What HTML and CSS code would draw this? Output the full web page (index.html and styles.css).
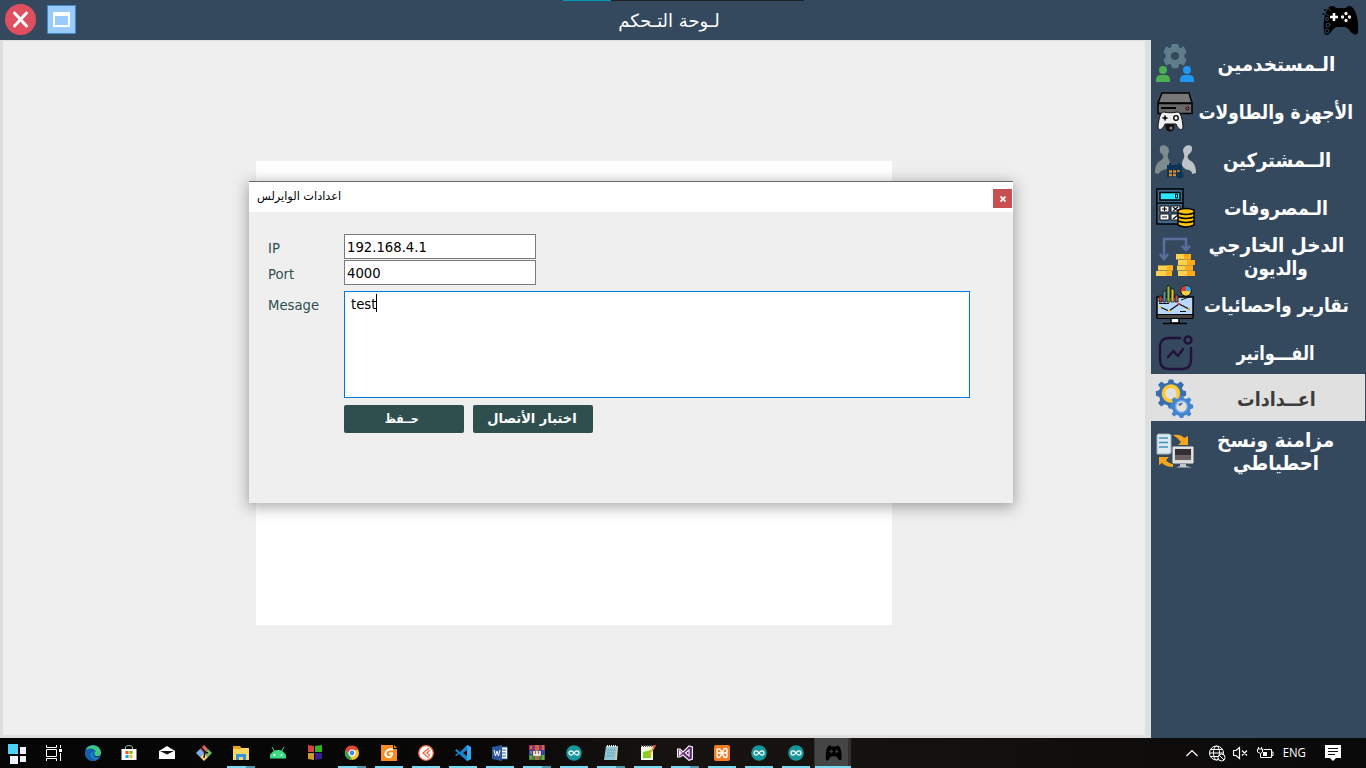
FILE: index.html
```html
<!DOCTYPE html>
<html lang="ar">
<head>
<meta charset="utf-8">
<title>لوحة التحكم</title>
<link rel="stylesheet" href="styles.css">
</head>
<body>
<svg class="defs" width="0" height="0" aria-hidden="true">
  <defs>
    <g id="pad">
      <path d="M7 2C10 0 13 1 14 3H24C26 0 29 1 31 3C35 8 37 18 36 27C35 31 31 30 28 26C26 23 24 22 22 22H16C13 22 11 24 9 27C6 31 3 31 2 27C1 18 2 8 7 2Z"/>
    </g>
    <g id="arduino">
      <circle cx="8" cy="8" r="7.800" fill="#16979c"/>
      <path d="M8 8C6 5 3 5.500 3 8S6 11 8 8S13 5.500 13 8S10 11 8 8Z" fill="none" stroke="#fff" stroke-width="1.300"/>
    </g>
    <path id="gear" d="M-3-12H3L4-8.500L7-7L10.500-9L13-4L10.500-2V2L13 4L10.500 9L7 7L4 8.500L3 12H-3L-4 8.500L-7 7L-10.500 9L-13 4L-10.500 2V-2L-13-4L-10.500-9L-7-7L-4-8.500Z"/>
    <path id="gear8" d="M-2-13H2L3-10L6-9L9-11L12-8L10-5L11-3L14-2V2L11 3L10 6L12 9L9 12L6 10L3 11L2 14H-2L-3 11L-6 10L-9 12L-12 9L-10 6L-11 3L-14 2V-2L-11-3L-10-5L-12-8L-9-11L-6-9L-3-10Z"/>
  </defs>
</svg>
<div class="app">
  <header class="topbar">
    <svg class="close" width="31" height="31" viewBox="0 0 31 31"><circle cx="15.500" cy="15.500" r="15.500" fill="#e04f5f"/><path d="M9.500 9L21.500 22M21.500 9L9.500 22" stroke="#fff" stroke-width="3" stroke-linecap="round"/></svg>
    <svg class="restore" width="29" height="29" viewBox="0 0 29 29"><path d="M.5.5H28.500V28.500H.5Z" fill="#98ccfd" stroke="#4788c7"/><path d="M7 9H22V21H7Z" fill="#98ccfd" stroke="#fff" stroke-width="2"/><path d="M6 7H23V11H6Z" fill="#fff"/></svg>
    <h1 class="title" dir="rtl">لـوحة التـحكم</h1>
    <svg class="brand" width="37" height="31" viewBox="0 0 37 31"><use href="#pad"/><path d="M8 12H16M12 8V16" stroke="#fff" stroke-width="2.500"/><g fill="none" stroke="#fff" stroke-width="1.300"><circle cx="24" cy="8.500" r="1"/><circle cx="24" cy="15.500" r="1"/><circle cx="20.500" cy="12" r="1"/><circle cx="27.500" cy="12" r="1"/></g><g fill="none" stroke="#34495e"><circle cx="5" cy="14" r="1.500"/><circle cx="6" cy="20" r="2"/><circle cx="5" cy="26" r="2"/><path d="M2 8L7 11M6 3L9 6"/></g><g fill="#000"><circle cx="3" cy="5" r="1"/><circle cx="1.500" cy="9" r="1"/><circle cx="5" cy="8" r="1"/></g></svg>
    <i class="strip"></i>
  </header>
  <div class="body">
    <main class="stage"><div class="panel"></div></main>
    <nav class="side">
      <a class="item"><svg width="40" height="40" viewBox="0 0 40 40"><use href="#gear" transform="translate(20 12) scale(.8 .92)" fill="#607d8b" stroke="#607d8b" stroke-width="2.500" stroke-linejoin="round"/><circle cx="20" cy="12" r="4" fill="#34495e"/><circle cx="8" cy="26" r="4" fill="#4caf50"/><path d="M1 38V36Q1 31 6 31H10Q15 31 15 36V38Z" fill="#4caf50"/><circle cx="32" cy="26" r="4" fill="#2196f3"/><path d="M25 38V36Q25 31 30 31H34Q39 31 39 36V38Z" fill="#2196f3"/></svg><span class="label" dir="rtl"><b class="t1">الـمستخدمين</b></span></a>
      <a class="item"><svg width="40" height="40" viewBox="0 0 40 40"><path d="M7 1H34L37 11H3Z" fill="#777" stroke="#000" stroke-width="1.500"/><path d="M3 11.500H37V21.500H3Z" fill="#686868" stroke="#000" stroke-width="1.500"/><path d="M6 16H21" stroke="#000" stroke-width="2"/><circle cx="32.500" cy="16.500" r="1.500" fill="#ff4081" stroke="#000"/><circle cx="15" cy="35" r="4.500" fill="#111"/><path d="M9 20C13 21 18 21 22 20C26 20 27 26 28 34C28 39 24 39 21 32H10C7 39 3 39 3 34C4 27 5 20 9 20Z" fill="#eee" stroke="#111"/><path d="M7.500 26H12.500M10 23.500V28.500" stroke="#000" stroke-width="1.500"/><circle cx="21" cy="26" r="2.300" fill="none" stroke="#000" stroke-width="1.300"/><circle cx="16" cy="36" r="1.500" fill="#888"/></svg><span class="label" dir="rtl"><b class="t2">الأجهزة والطاولات</b></span></a>
      <a class="item"><svg width="42" height="40" viewBox="0 0 42 40"><path d="M5 7C7 4 13 5 14 10C14 13 12 15 13 18C17 24 15 29 8 30C5 31 4 33 4 34L0 33C0 26 2 23 5 21C9 19 9 16 7 14C4 12 5 10 5 7Z" fill="#7f8c8d"/><path d="M37 7C35 4 29 5 28 10C28 13 30 15 29 18C25 24 27 29 34 30C37 31 37 33 37 34L41 33C41 26 39 23 36 21C32 19 32 16 34 14C37 12 37 10 37 7Z" fill="#bdc3c7"/><path d="M12 25H27V37H12Z" fill="#0b3556"/><path d="M15 23V27M24 23V27" stroke="#0b3556" stroke-width="2"/><path d="M14 31.500H25M14 35H21" stroke="#d98a2a" stroke-width="2.500" stroke-dasharray="3 1"/><circle cx="25" cy="35" r="3.500" fill="#0b3556"/></svg><span class="label" dir="rtl"><b class="t3">الــمشتركين</b></span></a>
      <a class="item"><svg width="40" height="40" viewBox="0 0 40 40"><path d="M1.800 1H28V36H1.800Z" fill="#3f6587" stroke="#000" stroke-width="1.500"/><path d="M5 4.500H25V12H5Z" fill="#2be4ff" stroke="#000" stroke-width="1.500"/><path d="M20.500 6H22.500V10H20.500Z" fill="none" stroke="#000"/><path d="M2 15H28" stroke="#000" stroke-width="1.500"/><path d="M5 18H14V24H5ZM16 18H25V24H16ZM5 26H14V32H5ZM16 26H25V32H16Z" fill="#fff" stroke="#111"/><path d="M7 21H12M9.500 19V23M18 19L23 23M23 19L18 23M7 29H12M18 31L23 27" stroke="#000" stroke-width="1.200"/><path d="M23 22Q31 19 39 22V37Q31 41 23 37Z" fill="#ffc50e" stroke="#000" stroke-width="1.500"/><path d="M23 25Q31 28 39 25M23 29Q31 32 39 29M23 33Q31 36 39 33" fill="none" stroke="#000" stroke-width="1.500"/></svg><span class="label" dir="rtl"><b class="t4">الـمصروفات</b></span></a>
      <a class="item two"><svg width="40" height="40" viewBox="0 0 40 40"><path d="M9 20V2H31V12M5 17L9 22L13 17M27 9L31 13L35 9" fill="none" stroke="#5a6f9e" stroke-width="2.500"/><path d="M3 28.500H18V33.500H3ZM1 34H17V39H1Z" fill="#ffd04c"/><path d="M12 28.500H18V33.500H12ZM11 34H17V39H11Z" fill="#ffb21d"/><path d="M21 17H35V22.500H21ZM23 23H39V28H23ZM22 28.500H38V33.500H22ZM23 34H39V39H23Z" fill="#ffd04c"/><path d="M29 17H36V22.500H29ZM32 23H40V28H32ZM30 28.500H38V33.500H30ZM32 34H40V39H32Z" fill="#ffaa16"/></svg><span class="label" dir="rtl"><b class="t5">الدخل الخارجي</b><b class="t6">والديون</b></span></a>
      <a class="item"><svg width="40" height="40" viewBox="0 0 40 40"><path d="M2 12H38V32H2Z" fill="#b9d8ff" stroke="#000" stroke-width="1.500"/><path d="M2 29.500H38V33.500H2Z" fill="#454545" stroke="#000"/><path d="M16 34V38H24V34" fill="#fff" stroke="#000" stroke-width="1.500"/><path d="M8 38.500H32" stroke="#000" stroke-width="1.500"/><g stroke="#111" stroke-width=".8"><path d="M4 11H7V17H4Z" fill="#d33"/><path d="M8 6H11V17H8Z" fill="#4d91a4"/><path d="M12 1H15V17H12Z" fill="#91bd2c"/><path d="M16 4H19V17H16Z" fill="#e4b93a"/><path d="M20 10H23V17H20Z" fill="#b55"/></g><path d="M5 22L14 26L24 19L34 24" fill="none" stroke="#111" stroke-width="1.300"/><path d="M4 18.500H14M25 26.500H31M26 15L34 12" stroke="#111"/><circle cx="5" cy="22" r="1.300" fill="#ec3"/><circle cx="14" cy="26" r="1.300" fill="#ec3"/><circle cx="24" cy="19" r="1.300" fill="#d33"/><circle cx="34" cy="24" r="1.300" fill="#e92"/><circle cx="31" cy="6" r="5.200" fill="#ffce3e" stroke="#000"/><path d="M31 6V.8A5.200 5.200 0 0 0 25.800 6Z" fill="#e33c34"/><path d="M31 6V.8A5.200 5.200 0 0 1 36.200 6Z" fill="#39a7df"/></svg><span class="label" dir="rtl"><b class="t7">تقارير واحصائيات</b></span></a>
      <a class="item bill"><svg width="40" height="40" viewBox="0 0 40 40"><g fill="none" stroke="#22113a" stroke-width="2.400" stroke-linecap="round" stroke-linejoin="round"><path d="M25 5H14Q5 5 5 14V27Q5 36 14 36H27Q36 36 36 27V15"/><circle cx="33" cy="7" r="3.500"/><path d="M13 24L18.500 18L23 23L28 16"/></g></svg><span class="label" dir="rtl"><b class="t8">الفـــواتير</b></span></a>
      <a class="item active"><svg width="40" height="40" viewBox="0 0 40 40"><use href="#gear8" transform="translate(16 15.500) scale(1.080)" fill="#3a6dae"/><circle cx="16" cy="15.500" r="7.500" fill="#e0e0e0" stroke="#ffc82e" stroke-width="3.500"/><use href="#gear8" transform="translate(26.500 28.500) scale(.83)" fill="#4384d1"/><circle cx="26.500" cy="28.500" r="6" fill="#e5e1d8" stroke="#62a2e8" stroke-width="1.500"/><path d="M23 27Q25 24 28 25L25 28Z" fill="#3a6dae"/></svg><span class="label" dir="rtl"><b class="t9">اعــدادات</b></span></a>
      <a class="item sync"><svg width="40" height="40" viewBox="0 0 40 40"><path d="M3 2H14L16 3V21L14 22H2V3Z" fill="#dceaf0" stroke="#9aafba"/><path d="M4 6H13M4 10.500H13M4 15H13" stroke="#3b91bd" stroke-width="1.700"/><path d="M18 3Q26 2 29 6L33 4V13H23L26 10Q23 6 18 3Z" fill="#f3a61e"/><path d="M4 33V25H14L11 28Q13 31 18 32L18 35Q11 35 7 31Z" fill="#f3a61e"/><path d="M18 15H38V31H18Z" fill="#d9d9d6" stroke="#eee"/><path d="M20 17H36V28H20Z" fill="#6b5f62"/><path d="M20 17H36V23H20Z" fill="#352e31"/><path d="M25 32H31V34L37 35.500H21L25 34Z" fill="#c4c8c8"/></svg><span class="label" dir="rtl"><b class="t10">مزامنة ونسخ</b><b class="t11">احطياطي</b></span></a>
    </nav>
  </div>
  <footer class="taskbar">
    <div class="start"><svg width="18" height="20" viewBox="0 0 18 20"><path d="M0 0H10V10H0Z" fill="#4cd2f7"/><path d="M12 3H19V10H12ZM2 12H10V20H2ZM12 12H18V18H12Z" fill="#eef4ff"/></svg></div>
    <div class="apps">
      <div class="app-btn"><svg width="16" height="16" viewBox="0 0 16 16"><path d="M.5 0V2.500H10.500V0M.5 4.500H10.500V11.500H.5ZM.5 16V13.500H10.500V16M14.500 0V3M14.500 8V16" fill="none" stroke="#fff"/><path d="M13 4H16V7H13Z" fill="#fff"/></svg></div>
      <div class="app-btn"><svg width="16" height="16" viewBox="0 0 16 16"><circle cx="8" cy="8" r="8" fill="#1680cf"/><path d="M1 4C4-1 14-1 16 7C16 12 10 12 10 10C11 7 8 4 1 4Z" fill="#42c879"/><path d="M0 8C0 4 8 1 11 7C3 5 3 14 12 15C5 18 0 13 0 8Z" fill="#155fa9"/><path d="M8 7Q7 12 15 11Q13 13 10 12Q8 10 8 7Z" fill="#101b28"/></svg></div>
      <div class="app-btn"><svg width="16" height="16" viewBox="0 0 16 16"><path d="M4.500 5V2Q5 .5 8 .5T11.500 2V5" fill="none" stroke="#aaa"/><path d="M.5 4H15.500V15H.5Z" fill="#fff"/><path d="M4.500 6H7.500V9H4.500Z" fill="#f25022"/><path d="M8.500 6H11.500V9H8.500Z" fill="#7fba00"/><path d="M4.500 10H7.500V13H4.500Z" fill="#00a4ef"/><path d="M8.500 10H11.500V13H8.500Z" fill="#ffb900"/></svg></div>
      <div class="app-btn"><svg width="16" height="16" viewBox="0 0 16 16"><path d="M0 6L8 1L16 6V14H0Z" fill="#fff"/><path d="M1 6H15L8 9.500L11 11Z" fill="#111"/></svg></div>
      <div class="app-btn"><svg width="16" height="16" viewBox="0 0 16 16"><path d="M8 0L12 4L8 8L4 4Z" fill="#e66363"/><path d="M4 4L8 8L4 12L0 8Z" fill="#7faef5"/><path d="M12 4L16 8L12 12L8 8Z" fill="#79bd62"/><path d="M8 8L12 12L8 16L4 12Z" fill="#f4d884"/><path d="M5 2L9 7L8 13M9 7L12 8" fill="none" stroke="#111" stroke-width="1.500"/></svg></div>
      <div class="app-btn open multi"><svg width="16" height="16" viewBox="0 0 16 16"><path d="M0 1H7L8 3H16V15H0Z" fill="#ffd65d"/><path d="M0 1H7L8 4H0Z" fill="#e7a314"/><path d="M3 15V9H13V15H10V12H6V15Z" fill="#3294df"/></svg></div>
      <div class="app-btn"><svg width="16" height="16" viewBox="0 0 16 16"><path d="M0 13C0 3 16 3 16 13ZM2 2L5 7M14 2L11 7" fill="#3ddc84" stroke="#3ddc84"/><circle cx="4.500" cy="10" r="1" fill="#fff"/><circle cx="11.500" cy="10" r="1" fill="#fff"/></svg></div>
      <div class="app-btn"><svg width="16" height="16" viewBox="0 0 16 16"><path d="M1 0L7 1V7H1Z" fill="#d94239"/><path d="M8 1L15 0V7H8Z" fill="#36b51c"/><path d="M1 8H7V15L1 14Z" fill="#cf9c27"/><path d="M8 8H15V14L8 15Z" fill="#361d91"/></svg></div>
      <div class="app-btn open multi"><svg width="16" height="16" viewBox="0 0 16 16"><circle cx="8" cy="8" r="7" fill="#f4c527"/><path d="M1.500 5A7 7 0 0 1 14.500 5H8L6 10Z" fill="#df493b"/><path d="M1.500 5L6 11L8 15A7 7 0 0 1 1.500 5Z" fill="#32a454"/><circle cx="8" cy="8" r="3" fill="#4285f4" stroke="#fff" stroke-width="1.200"/></svg></div>
      <div class="app-btn open"><svg width="16" height="16" viewBox="0 0 16 16"><path d="M0 0H12V4H16V16H0Z" fill="#f78c1f"/><path d="M13 0L16 3H13Z" fill="#f78c1f"/><path d="M12 4.500C5 3 3 9 5.500 11.500C9 13 11 12 11 8.500H8" fill="none" stroke="#fff" stroke-width="2"/></svg></div>
      <div class="app-btn open"><svg width="16" height="16" viewBox="0 0 16 16"><circle cx="8" cy="8" r="7.300" fill="#fff" stroke="#f36b3f" stroke-width="1.300"/><path d="M11 3L5 8L11 13M12 5L9 8L12 11" fill="none" stroke="#f36b3f" stroke-width="1.300"/></svg></div>
      <div class="app-btn open"><svg width="16" height="16" viewBox="0 0 16 16"><path d="M12 0L16 2V14L12 16L4 9L1.500 11L0 10L3 8L0 5.500L1.500 4L5 7ZM12 5L8 8L12 11Z" fill="#1686d0" fill-rule="evenodd"/><path d="M12 0L16 2V14L12 16Z" fill="#35a9ef"/></svg></div>
      <div class="app-btn open"><svg width="16" height="16" viewBox="0 0 16 16"><path d="M8 2H15.500V14H8Z" fill="#fff" stroke="#2b579a"/><path d="M9 5H14M9 8H14M9 11H14" stroke="#2b579a"/><path d="M0 2L10 0V16L0 14Z" fill="#2b579a"/><path d="M2 5L3.500 11L5 6L6.500 11L8 5" fill="none" stroke="#fff"/></svg></div>
      <div class="app-btn open multi"><svg width="16" height="16" viewBox="0 0 16 16"><path d="M0 0H16V5H0Z" fill="#a52b67"/><path d="M0 5H16V10H0Z" fill="#3545a4"/><path d="M0 10H16V15H0Z" fill="#37863d"/><path d="M6 0H10V15H6Z" fill="#b86d43"/><path d="M5 6V10H11V6M8 6V10" fill="none" stroke="#fff" stroke-width="1.500"/><path d="M2 1V4M2 6V9M2 11V14M14 0V5M14 10V15" stroke="#e3b83e"/></svg></div>
      <div class="app-btn open"><svg width="16" height="16" viewBox="0 0 16 16"><use href="#arduino"/></svg></div>
      <div class="app-btn open multi"><svg width="16" height="16" viewBox="0 0 16 16"><path d="M3 1H15L13 15H1Z" fill="#8fc5d4"/><path d="M14 1H15L14 15H12Z" fill="#d6cfaa"/><path d="M4 1H14" stroke="#eee" stroke-width="2" stroke-dasharray="1 1"/><path d="M4 5H12M4 8H12M3 11H11" stroke="#5e9cae" stroke-width=".6"/></svg></div>
      <div class="app-btn open"><svg width="16" height="16" viewBox="0 0 16 16"><path d="M1 1H13V15H1Z" fill="#f5f5e8"/><path d="M3 7L11 5V13H3Z" fill="#80d123"/><path d="M1 1H13" stroke="#666" stroke-width="2" stroke-dasharray="1 1"/><path d="M8 11L14 2" stroke="#e9a820" stroke-width="2"/><path d="M13.500 2.500L15 0" stroke="#df4e58" stroke-width="2.500"/></svg></div>
      <div class="app-btn open multi"><svg width="16" height="16" viewBox="0 0 16 16"><path d="M.6 4L3 4L6 7L12 .8L15.400 2V14L12 15.300L6 10L3 12L.6 12ZM2.500 6V10L4.500 8ZM12 5L8.500 8L12 11Z" fill="#68217a" fill-rule="evenodd" stroke="#fff" stroke-width="1.100"/></svg></div>
      <div class="app-btn open"><svg width="16" height="16" viewBox="0 0 16 16"><rect width="16" height="16" rx="2" fill="#f47b20"/><path d="M5 4H4Q3 4 3 5V6.500Q3 8 5 8H11Q13 8 13 6.500V5Q13 3.500 11.500 3.500Q10 3.500 9.500 5L6.500 11Q6 12.500 4.500 12.500Q3 12.500 3 11V9.500Q3 8 5 8M11 8Q13 8 13 9.500V11Q13 12.500 11.500 12.500Q10 12.500 9.500 11L6.500 5Q6 4 5 4" fill="none" stroke="#fff" stroke-width="1.500"/></svg></div>
      <div class="app-btn open"><svg width="16" height="16" viewBox="0 0 16 16"><use href="#arduino"/></svg></div>
      <div class="app-btn open"><svg width="16" height="16" viewBox="0 0 16 16"><use href="#arduino"/></svg></div>
      <div class="app-btn open current"><svg width="17" height="16" viewBox="0 0 37 31" preserveAspectRatio="none"><use href="#pad"/><path d="M9.500 12H18M13.700 8V16M22 12H29M25.500 8V16" stroke="#484848" stroke-width="2"/></svg></div>
    </div>
    <div class="tray">
      <svg width="12" height="8" viewBox="0 0 12 8"><path d="M.5 7L6 1.500L11.500 7" fill="none" stroke="#fff" stroke-width="1.200"/></svg>
      <svg class="globe" width="17" height="17" viewBox="0 0 17 17"><g fill="none" stroke="#fff"><circle cx="7.500" cy="8" r="7"/><ellipse cx="7.500" cy="8" rx="3" ry="7"/><path d="M.5 8H14M1.500 4.500H13.500M1.500 11.500H9"/><circle cx="12.500" cy="12.500" r="3.500" fill="#111"/><path d="M10 10L15 15"/></g></svg>
      <svg class="vol" width="15" height="14" viewBox="0 0 15 14"><path d="M.5 4.500H3L6.500 1.500V12.500L3 9.500H.5ZM9 4.500L14 9.500M14 4.500L9 9.500" fill="none" stroke="#fff" stroke-width="1.200"/></svg>
      <svg class="bat" width="17" height="14" viewBox="0 0 17 14"><path d="M6.500 3.500H14.500V11.500H3.500V8M14.500 6H16V9.500H14.500M1.500 1V3M4.500 1V3M.5 3H5.500V6L3.500 7.500L.5 6Z" fill="none" stroke="#fff"/><path d="M6 6H10V10H6Z" fill="#fff"/></svg>
      <span class="lang">ENG</span>
      <svg class="note" width="16" height="16" viewBox="0 0 16 16"><path d="M0 0H16V13H11L8 16L5 13H0Z" fill="#fff"/><path d="M3 3.500H13M3 6.500H13M3 9.500H10" stroke="#111"/></svg>
    </div>
  </footer>
</div>
<section class="dialog">
  <div class="dialog-head"><h2 class="dialog-title" dir="rtl">اعدادات الوايرلس</h2><button class="dialog-x"><svg width="6" height="6" viewBox="0 0 6 6"><path d="M.5.5L5.500 5.500M5.500.5L.5 5.500" stroke="#fff" stroke-width="1.700"/></svg></button></div>
  <div class="form">
    <label class="lab">IP</label><div class="field">192.168.4.1</div>
    <label class="lab">Port</label><div class="field">4000</div>
    <label class="lab msg">Mesage</label><div class="field area">test<i class="caret"></i></div>
    <div class="actions"><button class="btn" dir="rtl"><b class="b1">حــفظ</b></button><button class="btn" dir="rtl"><b class="b2">اختبار الأتصال</b></button></div>
  </div>
</section>
</body>
</html>
```
FILE: styles.css
```css
* { box-sizing: border-box; }
body { margin: 0; width: 1366px; height: 768px; overflow: hidden; font-family: "DejaVu Sans Condensed", "DejaVu Sans", sans-serif; }
.defs { position: absolute; }
svg { flex: none; display: block; }
.app { display: flex; flex-direction: column; height: 768px; background: #34495e; }
.topbar { position: relative; height: 40px; display: flex; align-items: flex-start; flex: none; }
.close { margin: 4px 0 0 5px; }
.restore { margin: 5px 0 0 11px; }
.title { margin: 9px 0 0; width: 1186px; text-align: center; color: #fff; font: 18px/24px "DejaVu Sans", sans-serif; }
.brand { margin: 5px 0 0 60px; }
.strip { position: absolute; left: 563px; top: 0; width: 241px; height: 1px; background: linear-gradient(90deg, #0099bc 48px, #202020 48px); }
.body { display: flex; height: 698px; flex: none; }
.stage { width: 1151px; background: #efefef; border: solid #dfdfdf; border-width: 1px 6px 3px 3px; padding: 120px 0 0 253px; }
.panel { width: 636px; height: 464px; background: #fff; }
.side { width: 214px; color: #fff; }
.item { display: flex; align-items: center; height: 48px; padding-left: 4px; }
.item.two { height: 49px; }
.item.bill { height: 45px; padding-top: 3px; }
.item.active { height: 47px; background: #e0e0e0; color: #3c3c3c; }
.item.active .label { padding-top: 2px; }
.item.sync { height: 60px; }
.item.sync svg { margin-top: 2px; }
.label { flex: 1; min-width: 0; display: flex; flex-direction: column; align-items: center; font: bold 18px/23px "DejaVu Sans", sans-serif; white-space: nowrap; padding: 0 8px 0 0; margin-top: -1px; }
.item:nth-child(3) .label { padding-right: 6px; margin-left: -2px; }
.label b { display: block; }
.t1 { transform: scale(1.026, 1.08); }
.t2 { transform: scale(.945, 1.08); }
.t3 { transform: scale(1, 1.08); }
.t4 { transform: scale(.963, 1.08); }
.t5 { transform: scale(1.022, 1.08); }
.t6 { transform: scale(.94, 1.08); }
.t7 { transform: scale(.935, 1.08); }
.t8 { transform: scale(.895, 1.08); }
.t9 { transform: scale(.975, 1.08); }
.t10 { transform: scale(1.035, 1.08); }
.t11 { transform: scale(1, 1.08); }
.taskbar { display: flex; height: 30px; background: linear-gradient(90deg, #050505, #090807 35%, #171311 50%, #14110f 68%, #090909 100%); color: #fff; }
.start { width: 37px; padding: 6px 0 0 8px; }
.apps { display: flex; width: 1149px; }
.app-btn { width: 37px; height: 30px; padding: 7px 0 0 9px; }
.app-btn:nth-child(n+2) svg { margin-left: 2px; }
.app-btn:nth-child(3) svg { margin-left: 1px; }
.open { background: linear-gradient(#76daf2, #76daf2) 5px 28px / 28px 2px no-repeat; }
.app-btn:nth-child(n+2) { padding-left: 9px; }
.multi { background: linear-gradient(90deg, #76daf2 19px, #5098a9 19px) 5px 28px / 28px 2px no-repeat; }
.current { background: linear-gradient(#76daf2, #76daf2) 1px 28px / 36px 2px no-repeat, linear-gradient(#454545, #454545) 1px 0 / 33px 30px no-repeat, #303030; }
.tray { display: flex; align-items: center; flex: 1; }
.globe { margin-left: 11px; }
.vol { margin-left: 7px; }
.bat { margin-left: 9px; }
.lang { font: 12px/16px "Open Sans", sans-serif; margin-left: 8px; width: 26px; transform: scaleX(.95); }
.note { margin-left: 17px; }
.dialog { position: absolute; left: 249px; top: 181px; width: 764px; height: 322px; background: #efefef; border-top: 1px solid #696969; box-shadow: 0 3px 14px 1px rgba(0,0,0,.34); }
.dialog-head { height: 30px; background: #fff; display: flex; justify-content: space-between; padding: 0 1px 0 8px; }
.dialog-title { margin: 6px 0 0; font: 11.3px/18px "DejaVu Sans", sans-serif; color: #000; white-space: nowrap; }
.dialog-x { margin-top: 7px; width: 19px; height: 19px; border: 0; padding: 0; background: #c75050; display: flex; align-items: center; justify-content: center; }
.form { display: grid; grid-template-columns: 76px 626px; grid-template-rows: 25px 25px 107px 28px; row-gap: 1px; padding: 22px 0 0 19px; font-size: 15px; line-height: 23px; }
.lab { color: #2f4f4f; padding-top: 2px; font-size: 14.7px; }
.field { width: 192px; height: 25px; background: #fff; border: 1px solid #7a7a7a; padding: 1px 0 0 2px; line-height: 22px; color: #000; font-size: 14.7px; }
.msg { padding-top: 7px; }
.area { display: flex; width: 626px; height: 107px; border-color: #0078d7; margin-top: 5px; padding: 1px 0 0 6px; }
.caret { width: 1px; height: 18px; background: #000; margin-top: 1px; }
.actions { grid-column: 2; display: flex; gap: 9px; margin-top: 11px; }
.btn { width: 120px; height: 28px; border: 0; border-radius: 2px; padding: 0; background: #2f4f4f; color: #fff; font: bold 13px/28px "DejaVu Sans", sans-serif; }
.btn b { display: inline-block; }
.b1 { transform: translateX(-2px) scaleX(.82); }
.b2 { transform: translateX(-1px) scaleY(1.05); }
```
